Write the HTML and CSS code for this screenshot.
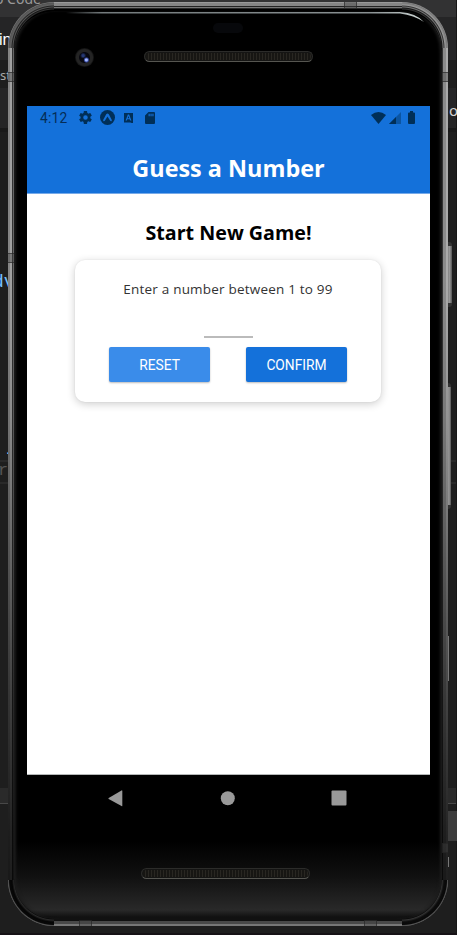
FILE: index.html
```html
<!DOCTYPE html>
<html lang="en">
<head>
<meta charset="utf-8">
<title>Guess a Number</title>
<link rel="stylesheet" href="styles.css">
</head>
<body>
<div class="stage">
  <div class="editor">
    <span class="code title">o Code</span>
    <span class="code tab">in</span>
    <span class="code crumb">st</span>
    <span class="code keyword">dv</span>
    <span class="code dot">.</span>
    <span class="code ghost">r</span>
    <span class="code edge">o</span>
    <i class="scrollbar"></i>
    <i class="scrollbar small"></i>
    <i class="panel"></i>
  </div>
  <i class="side-key power"></i>
  <i class="side-key volume"></i>
  <div class="phone">
    <i class="seam left-top"></i><i class="seam left-mid"></i><i class="seam right-top"></i><i class="seam right-low"></i>
    <i class="seam flat top"></i><i class="seam flat bottom-left"></i><i class="seam flat bottom-right"></i>
    <div class="body">
      <svg class="gloss" viewBox="0 0 427 30" width="427" height="30">
        <defs><linearGradient id="g"><stop offset="0" stop-color="#889093" stop-opacity="0"/><stop offset=".1" stop-color="#737a7c"/><stop offset=".85" stop-color="#899092"/><stop offset="1" stop-color="#cdd6d4"/></linearGradient></defs>
        <path d="M52 1H386Q402 2 410 11Q400 4 386 2.400H52Z" fill="url(#g)"/>
      </svg>
      <div class="top-bezel">
        <i class="sensor"></i>
        <i class="camera"></i>
        <i class="speaker"></i>
      </div>
      <main class="screen">
        <header class="header">
          <div class="status">
            <span class="clock">4:12</span>
            <svg class="icon gear" viewBox="2 2 20 20" width="13" height="13"><path d="M19.4 13c0-.3.1-.6.1-1s0-.7-.1-1l2.1-1.6c.2-.2.2-.4.1-.6l-2-3.5c-.1-.2-.4-.3-.6-.2l-2.5 1c-.5-.4-1.1-.7-1.7-1l-.4-2.6c0-.3-.2-.5-.5-.5h-4c-.2 0-.4.2-.5.4l-.4 2.7c-.6.2-1.1.6-1.7 1l-2.4-1c-.2-.1-.5 0-.6.2l-2 3.5c-.1.2-.1.4.1.6L4.600 11c-.1.300-.1.700-.1 1s0 .7.1 1l-2.200 1.600c-.2.200-.2.400-.1.600l2 3.500c.1.200.4.300.6.200l2.400-1c.6.400 1.100.700 1.700 1l.4 2.600c0 .300.3.500.5.500h4c.3 0 .5-.2.5-.5l.4-2.600c.6-.3 1.200-.6 1.700-1l2.500 1c.2.100.5 0 .6-.2l2-3.500c.1-.2.1-.4-.1-.6zM12 15.500a3.500 3.500 0 1 1 0-7 3.500 3.500 0 0 1 0 7z"/></svg>
            <svg class="icon expo" viewBox="0 0 15 15" width="15" height="15"><circle cx="7.500" cy="7.500" r="7.500"/><path class="cut" d="M3.600 11.200Q2.800 10.500 3.400 9.500L6.200 4.300Q7.500 2.700 8.800 4.300L11.600 9.500Q12.200 10.500 11.400 11.200Q10.600 11.500 10 10.500L7.500 6.600L5 10.500Q4.400 11.500 3.600 11.200Z"/></svg>
            <svg class="icon letter" viewBox="0 0 9 10" width="9" height="10"><path fill-rule="evenodd" d="M0 0H9V10H7.500L6.500 9.500H0ZM3.900 1.500L1.600 7.600H2.800L3.300 6.300H5.700L6.200 7.600H7.400L5.100 1.500ZM4.500 3.100L5.300 5.300H3.700Z"/></svg>
            <svg class="icon card-icon" viewBox="0 0 10 12" width="10" height="12"><path fill-rule="evenodd" d="M3.500 0H9Q10 0 10 1V11Q10 12 9 12H1Q0 12 0 11V3.500ZM3.600 1.800V4.200H4.700V1.800ZM5.500 1.800V4.200H6.600V1.800ZM7.400 1.800V4.200H8.500V1.800Z"/></svg>
            <svg class="icon wifi" viewBox="0 0 15 12" width="15" height="12"><path d="M0 2.900Q7.500-2.700 15 2.900L7.500 12Z"/></svg>
            <svg class="icon signal" viewBox="0 0 12 12" width="12" height="12"><path opacity=".42" d="M0 12L12 0V12Z"/><path d="M0 12L7 5V12Z"/></svg>
            <svg class="icon battery" viewBox="0 0 7 13" width="7" height="13"><path d="M2 0H5V1.500H6Q7 1.500 7 2.500V12Q7 13 6 13H1Q0 13 0 12V2.500Q0 1.500 1 1.500H2Z"/></svg>
          </div>
          <h1>Guess a Number</h1>
        </header>
        <section class="content">
          <h2>Start New Game!</h2>
          <div class="card">
            <p>Enter a number between 1 to 99</p>
            <div class="field"></div>
            <div class="actions"><button class="btn reset">RESET</button><button class="btn">CONFIRM</button></div>
          </div>
        </section>
      </main>
      <nav class="nav">
        <svg viewBox="0 0 15 17" width="15" height="17"><path d="M14.300 .9V15.700Q14.300 16.500 13.500 16.100L.7 9.100Q0 8.500.7 7.900L13.500.5Q14.300 .1 14.300 .9Z"/></svg>
        <svg viewBox="0 0 15 15" width="15" height="15"><circle cx="7.800" cy="7.300" r="7"/></svg>
        <svg viewBox="0 0 16 16" width="16" height="16"><rect x=".5" y=".5" width="15" height="15" rx="1"/></svg>
      </nav>
      <i class="speaker low"></i>
    </div>
  </div>
</div>
</body>
</html>
```
FILE: styles.css
```css
* { box-sizing: border-box; }
body { margin: 0; background: #1e1e1e; overflow: hidden; }
i { display: block; }

.stage { position: relative; width: 457px; height: 935px; padding: 2px 9px 9px 8px; overflow: hidden; }
.editor {
  position: absolute; inset: 0; border-right: 1px solid #171717;
  border-bottom: 2px solid #161216;
  background: linear-gradient(#323233 0 17px, #252526 17px 60px, #1e1e1e 60px 88px, #252526 88px 128px, #191919 128px 132px, #1e1e1e 132px 460px, #292929 460px 462px, #1e1e1e 462px 482px, #292929 482px 484px, #1e1e1e 484px 788px, #2a2a2a 788px 803px, #484848 803px 804px, #1e1e1e 804px);
}
.code { position: absolute; left: 0; line-height: 18px; font-family: "Liberation Sans", sans-serif; font-size: 15px; color: #d4d4d4; }
.title { left: -5px; top: -10px; font-family: "Noto Sans", sans-serif; font-size: 14px; color: #999; }
.tab { top: 31px; left: -1px; font-size: 16px; color: #fff; }
.crumb { top: 66px; font-family: "Noto Sans", sans-serif; font-size: 13px; color: #aaa; }
.keyword { top: 273px; left: -7px; font-family: "Liberation Mono", monospace; font-size: 18px; color: #75beff; }
.dot { top: 440px; left: 6px; color: #9cdcfe; }
.ghost { top: 462px; left: -2px; font-family: "Liberation Mono", monospace; font-size: 17px; color: #555; }
.edge { left: 449px; top: 101px; font-family: "Noto Sans", sans-serif; }
.scrollbar { position: absolute; left: 448px; top: 636px; width: 1px; height: 45px; background: #777; }
.scrollbar.small { top: 857px; height: 10px; }
.panel { position: absolute; left: 448px; top: 811px; width: 9px; height: 30px; background: #3c3c3c; }

.side-key { position: absolute; left: 446px; width: 6px; border-radius: 1px 3px 3px 1px; background: linear-gradient(90deg, #666, #999 60%, #555); border: solid #333; border-width: 4px 0; }
.power { top: 242px; height: 65px; }
.volume { top: 383px; height: 126px; width: 5px; }

.phone {
  position: relative; width: 440px; height: 924px; padding: 9px 6px 7px; border-radius: 46px;
  background:
    radial-gradient(circle at 100% 100%, #000 38px, #333 39px, #151515 40px, #555 41px, #222 42px, #606060 43px, #555 45px, #888 46px) 0 0 / 46px 46px no-repeat,
    radial-gradient(circle at 0 100%, #000 38px, #333 39px, #151515 40px, #777 41px, #333 42px, #999 43px, #777 45px, #999 46px) 100% 0 / 46px 46px no-repeat,
    radial-gradient(circle at 100% 0, #151515 38px, #080808 39px, #2a2a2a 40px, #050505 42px, #080808 44.5px, #777 46px) 0 100% / 46px 46px no-repeat,
    radial-gradient(circle at 0 0, #151515 38px, #080808 39px, #333 40px, #0c0c0c 42px, #080808 44.5px, #777 46px) 100% 100% / 46px 46px no-repeat,
    linear-gradient(#999 0 1px, #858585 1px 4px, #222 4px 5px, #777 5px 6px, #292929 6px 7px, #000 7px 9px) 46px 0 / 348px 9px no-repeat,
    linear-gradient(#111 0 2px, #494949 2px 5px, #777 5px 7px) 46px 100% / 348px 7px no-repeat,
    linear-gradient(transparent 0 30%, #0002 45%, #0009 75%, #000000c8 90%, #000000d8 100%),
    linear-gradient(90deg, #858585 0 2px, #a1a1a1 2px 4px, #333 4px 5px, #666 5px 6px, #111 6px 434px, #333 434px 435px, #8a8a8a 435px 438px, #aaa 438px);
}
.seam { position: absolute; width: 6px; height: 10px; background: #4446; border: solid #2229; border-width: 1px 0; }
.left-top { left: 0; top: 70px; }
.left-mid { left: 0; top: 251px; }
.right-top { right: 0; top: 70px; }
.right-low { right: 0; top: 841px; }
.seam.flat { width: 13px; height: 6px; border-width: 0 1px; }
.top { top: 0; left: 336px; }
.bottom-left { bottom: 0; left: 71px; }
.bottom-right { bottom: 0; left: 356px; }

.body {
  position: relative; height: 908px; padding: 0 12px 0 13px; border-radius: 40px; overflow: hidden;
  display: flex; flex-direction: column;
  background: linear-gradient(transparent 830px, #101010 865px, #292929 899px, #111 906px);
  background-color: #000;
  box-shadow: inset 3px 0 3px -1px #1c1c1c, inset -3px 0 3px -1px #1c1c1c;
}
.gloss { position: absolute; left: 0; top: 0; width: 427px; height: 30px; }
.top-bezel { position: relative; flex: 0 0 95px; }
.sensor { width: 30px; height: 10px; margin: 12px 0 0 186px; border-radius: 5px; background: #07080b; }
.camera { position: absolute; left: 48px; top: 37px; width: 19px; height: 19px; border-radius: 50%; background: radial-gradient(circle at 60% 63%, #a5b8ff 0 1px, #394ba0 2px, transparent 3px), radial-gradient(circle at 43% 40%, #253875 0 1px, transparent 3px), radial-gradient(circle, #08080f 0 5px, #242424 6px 8px, #151515 9px); }
.speaker { width: 169px; height: 11px; margin: 18px 0 0 117px; border: 1px solid #2c2c2a; border-bottom-color: #555550; border-radius: 6px; background: repeating-linear-gradient(90deg, #292722 0 1px, #171613 1px 3px); box-shadow: inset 0 0 0 1px #151514; }
.screen { flex: 0 0 669px; width: 403px; background: #fff; border-bottom: 1px solid #b5b8b8; }
.header { height: 88px; background: #1471da; border-bottom: 1px solid #76aae9; }
.status { height: 23px; padding: 0 15px 0 13px; display: flex; align-items: center; color: #052d56; }
.clock { width: 39px; font: 13.800px/24px Roboto, sans-serif; letter-spacing: .2px; }
.icon { fill: #002f58; flex: none; }
.expo { margin-left: 8px; }
.expo .cut { fill: #1471da; }
.letter { margin-left: 9px; }
.card-icon { margin-left: 12px; }
.wifi { margin-left: auto; }
.signal { margin-left: 3px; }
.battery { margin-left: 7px; }
h1 { margin: 21px 0 0; text-align: center; font: 700 23.400px/36px "Open Sans", sans-serif; color: #fff; }
.content { padding: 22px 0 0; }
h2 { margin: 0; text-align: center; font: 700 19.700px/34px "Open Sans", sans-serif; color: #000; }
.card { width: 306px; height: 142px; margin: 10px auto 0 48px; padding: 18px 34px; border-radius: 10px; background: #fff; box-shadow: 0 2px 8px #0003, 0 0 2px #0001; }
.card p { margin: 0; text-align: center; white-space: nowrap; font: 13.500px/22px "Open Sans", sans-serif; letter-spacing: .2px; color: #333; }
.field { width: 49px; height: 38px; margin: 0 auto; border-bottom: 2px solid #bbb; }
.actions { display: flex; justify-content: space-between; margin-top: 9px; }
.btn { width: 101px; height: 35px; padding: 0; border: 0; border-radius: 2px; background: #1471da; color: #fff; font: 13.800px/36px Roboto, sans-serif; box-shadow: 0 1px 2px #0004; }
.reset { background: #3a8cea; }
.nav { height: 46px; padding: 0 83px 0 81px; display: flex; justify-content: space-between; align-items: center; fill: #999; }
.speaker.low { margin: 47px 0 0 114px; }
```
